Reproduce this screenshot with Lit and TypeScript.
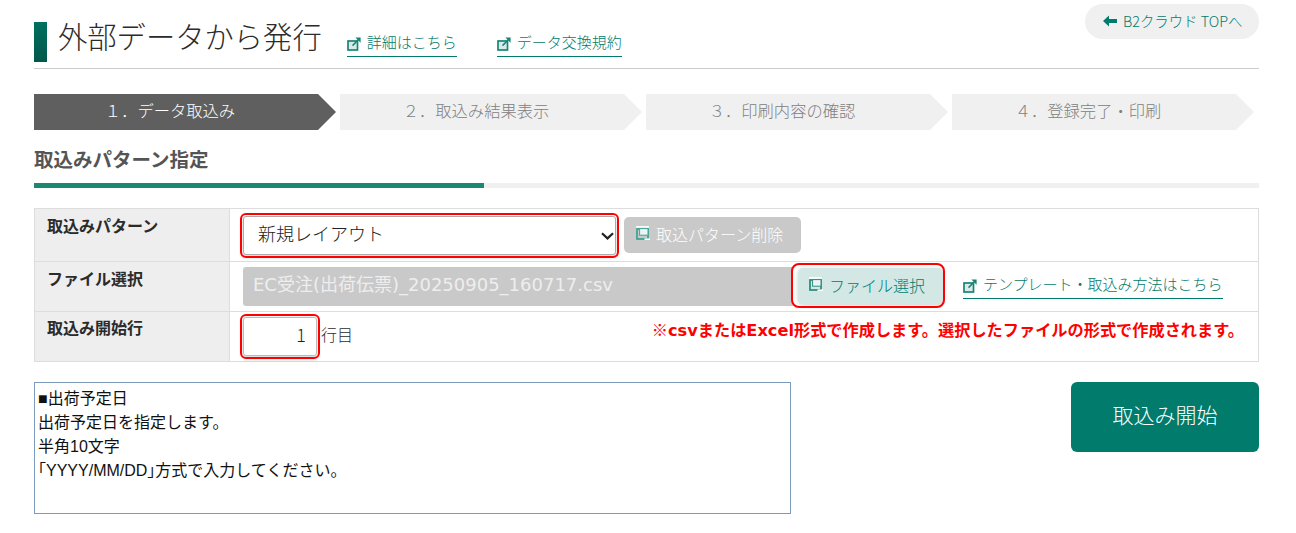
import { LitElement, html, css } from "lit";
import { customElement } from "lit/decorators.js";

const ext = () => html`<svg class="ic" width="14" height="14" viewBox="0 0 14 14" fill="none">
  <rect x="1" y="4" width="9.5" height="9" fill="#d8ebe8" stroke="#1a8474" stroke-width="1.7" />
  <path d="M5.5 8.6 11.5 2.6" stroke="#1a8474" stroke-width="1.5" />
  <path d="M8.4 .6H13.6V5.8Z" fill="#1a8474" />
</svg>`;

const copy = (back: string) => html`<svg class="ic" width="15" height="15" viewBox="0 0 15 15" fill="none">
  <path d="M1 .9H14" stroke="#fff" stroke-width="1.6" />
  <rect x="2" y="3" width="11" height="10" stroke=${back} stroke-width="1.8" />
  <rect x="4.6" y="2.6" width="8.4" height="6.6" fill="#eef4f3" stroke=${back} stroke-width="1" />
  <path d="M9.5 13.2H15" stroke="#fff" stroke-width="1.6" />
</svg>`;

@customElement("app-root")
export class AppRoot extends LitElement {
  static styles = css`
    :host {
      display: block;
      box-sizing: border-box;
      width: 1296px;
      height: 533px;
      padding: 4px 37px 0 34px;
      background: #fff;
      color: #2b2b2b;
      font-family: "Noto Sans CJK JP", "Noto Sans", sans-serif;
      overflow: hidden;
    }
    * { box-sizing: border-box; }
    .ic { flex: none; display: block; }
    .head {
      display: flex;
      align-items: flex-start;
      height: 65px;
      border-bottom: 1px solid #ccc;
    }
    .bar {
      width: 13px;
      height: 40px;
      margin-top: 18px;
      background: linear-gradient(#00705f, #00584b);
      flex: none;
    }
    h1 {
      margin: 11px 0 0 11px;
      font-size: 29.3px;
      line-height: 40px;
      font-weight: 300;
      white-space: nowrap;
    }
    .link {
      display: inline-flex;
      align-items: center;
      gap: 6px;
      color: #007b6c;
      font-size: 15px;
      font-weight: 300;
      line-height: 22px;
      border-bottom: 1px solid #007b6c;
      white-space: nowrap;
    }
    .head .link { margin-top: 27px; padding-bottom: 3px; }
    .head .link .ic { margin-top: 4px; }
    .l1 { margin-left: 25px; }
    .l2 { margin-left: 40px; }
    .top {
      margin-left: auto;
      width: 174px;
      height: 35px;
      border-radius: 18px;
      background: #f0f0f0;
      color: #007b6c;
      font-size: 14.4px;
      font-weight: 300;
      display: flex;
      align-items: center;
      gap: 6px;
      padding: 0 0 2px 18px;
      white-space: nowrap;
    }
    .steps {
      display: flex;
      gap: 4px;
      margin-top: 25px;
    }
    .step {
      width: 302px;
      height: 36px;
      background: #f0f0f0;
      color: #808080;
      font-size: 16.3px;
      font-weight: 300;
      line-height: 32px;
      text-align: center;
      padding-right: 30px;
      white-space: nowrap;
      clip-path: polygon(0 0, 284px 0, 302px 50%, 284px 100%, 0 100%);
    }
    .step.on { background: #5f5f5f; color: #fff; }
    h2 {
      margin: 14px 0 0;
      font-size: 19.5px;
      line-height: 30px;
      font-weight: 700;
      color: #555;
      white-space: nowrap;
    }
    .prog {
      margin-top: 9px;
      height: 5px;
      background: #f0f0f0;
    }
    .prog div { width: 450px; height: 100%; background: #1a8874; }
    .tbl {
      margin-top: 20px;
      display: grid;
      grid-template-columns: 195px 1fr;
      grid-template-rows: 52px 50px 50px;
      border: 1px solid #ddd;
      height: 154px;
    }
    .th {
      background: #eee;
      border-right: 1px solid #ddd;
      font-size: 16px;
      font-weight: 700;
      padding: 3px 0 0 12px;
      line-height: 26px;
      white-space: nowrap;
    }
    .th.r3 { padding-top: 2px; }
    .td { display: flex; align-items: flex-start; padding-left: 13px; }
    .th + .td ~ .th, .th + .td ~ .td { border-top: 1px solid #ddd; }
    .selwrap { position: relative; margin-top: 7px; }
    .selwrap .chev { position: absolute; right: 2px; top: 16px; pointer-events: none; }
    select {
      appearance: none;
      display: block;
      width: 373px;
      height: 39px;
      border: 1px solid #aaa;
      border-radius: 3px;
      background: #fff;
      color: #222;
      font: 300 18px "Noto Sans CJK JP", sans-serif;
      padding: 0 0 5px 14px;
      box-shadow: 0 2px 5px rgba(0,0,0,.18);
      outline: 2px solid #f00;
      outline-offset: 1px;
    }
    .btn {
      display: flex;
      align-items: center;
      font-size: 16px;
      font-weight: 300;
      border-radius: 5px;
      white-space: nowrap;
      padding-bottom: 3px;
    }
    .del {
      margin: 8px 0 0 8px;
      width: 177px;
      height: 36px;
      background: #c9c9c9;
      color: #fff;
      padding-left: 11px;
      gap: 6px;
    }
    .file {
      width: 550px;
      height: 39px;
      margin-top: 5px;
      background: #c9c9c9;
      color: #eee;
      border-radius: 3px 0 0 3px;
      font-family: "DejaVu Sans", "Noto Sans CJK JP", sans-serif;
      font-size: 18px;
      font-weight: 400;
      line-height: 36px;
      padding-left: 10px;
      white-space: nowrap;
    }
    .pickwrap {
      margin-top: 3px;
      padding: 3px 0 2px 5px;
      border-radius: 6px;
      outline: 2px solid #f00;
    }
    .pick {
      width: 145px;
      height: 36px;
      background: #d3e7e4;
      color: #007b6c;
      padding-left: 10px;
      gap: 6px;
      box-shadow: 0 1px 4px rgba(0,0,0,.2);
    }
    .td .tpl { margin: 10px 0 0 20px; font-size: 15px; gap: 6px; padding-bottom: 2px; line-height: 24px; }
    .tpl .ic { margin-top: 4px; }
    .num {
      width: 74px;
      height: 39px;
      margin-top: 5px;
      border: 1px solid #bbb;
      border-radius: 3px;
      box-shadow: 0 2px 5px rgba(0,0,0,.18);
      outline: 2px solid #f00;
      outline-offset: 1px;
      font: 300 18px "Noto Sans CJK JP", sans-serif;
      color: #222;
      text-align: right;
      padding: 0 10px 5px 0;
      background: #fff;
    }
    .unit { margin: 10px 0 0 4px; font-size: 16px; font-weight: 300; line-height: 24px; }
    .note {
      margin: 5px 0 0 auto;
      padding-right: 14px;
      color: #f00;
      font-family: "DejaVu Sans", "Noto Sans CJK JP", sans-serif;
      font-size: 16.2px;
      font-weight: 700;
      line-height: 24px;
      white-space: nowrap;
    }
    .cjk { font-family: "Noto Sans CJK JP", sans-serif; }
    .foot {
      display: flex;
      justify-content: space-between;
      align-items: flex-start;
      margin-top: 20px;
    }
    textarea {
      display: block;
      width: 757px;
      height: 132px;
      border: 1px solid #7d9cbd;
      border-radius: 0;
      padding: 4px 3px;
      margin: 0;
      resize: none;
      color: #111;
      font: 16px/24px "Liberation Sans", "Noto Sans CJK JP", sans-serif;
      font-feature-settings: "halt";
      outline: none;
    }
    .go {
      width: 188px;
      height: 70px;
      border-radius: 6px;
      background: #007b6c;
      color: #fff;
      font-size: 21px;
      font-weight: 300;
      display: flex;
      align-items: center;
      justify-content: center;
      padding-bottom: 6px;
    }
  `;

  render() {
    return html`
      <div class="head">
        <div class="bar"></div>
        <h1>外部データから発行</h1>
        <a class="link l1">${ext()}詳細はこちら</a>
        <a class="link l2">${ext()}データ交換規約</a>
        <div class="top">
          <svg class="ic" width="14" height="12" viewBox="0 0 14 12" fill="#007b6c"><path d="M0 6 6 .5V4H14V8H6V11.5Z" /></svg>
          B2クラウド TOPへ
        </div>
      </div>
      <div class="steps">
        <div class="step on">１．データ取込み</div>
        <div class="step">２．取込み結果表示</div>
        <div class="step">３．印刷内容の確認</div>
        <div class="step">４．登録完了・印刷</div>
      </div>
      <h2>取込みパターン指定</h2>
      <div class="prog"><div></div></div>
      <div class="tbl">
        <div class="th">取込みパターン</div>
        <div class="td">
          <div class="selwrap">
            <select><option>新規レイアウト</option></select>
            <svg class="chev" width="13" height="8" viewBox="0 0 13 8" fill="none" stroke="#222" stroke-width="2.2"><path d="M1 1.2 6.5 6.4 12 1.2" /></svg>
          </div>
          <div class="btn del">${copy("#3fa595")}取込パターン削除</div>
        </div>
        <div class="th">ファイル選択</div>
        <div class="td">
          <div class="file">EC受注(出荷伝票)_20250905_160717.csv</div>
          <div class="pickwrap"><div class="btn pick">${copy("#2f8f81")}ファイル選択</div></div>
          <a class="link tpl">${ext()}テンプレート・取込み方法はこちら</a>
        </div>
        <div class="th r3">取込み開始行</div>
        <div class="td">
          <input class="num" value="1" />
          <span class="unit">行目</span>
          <span class="note"><span class="cjk">※</span>csvまたはExcel形式で作成します。選択したファイルの形式で作成されます。</span>
        </div>
      </div>
      <div class="foot">
        <textarea readonly .value=${"■出荷予定日\n出荷予定日を指定します。\n半角10文字\n「YYYY/MM/DD」方式で入力してください。"}></textarea>
        <div class="go">取込み開始</div>
      </div>
    `;
  }
}
